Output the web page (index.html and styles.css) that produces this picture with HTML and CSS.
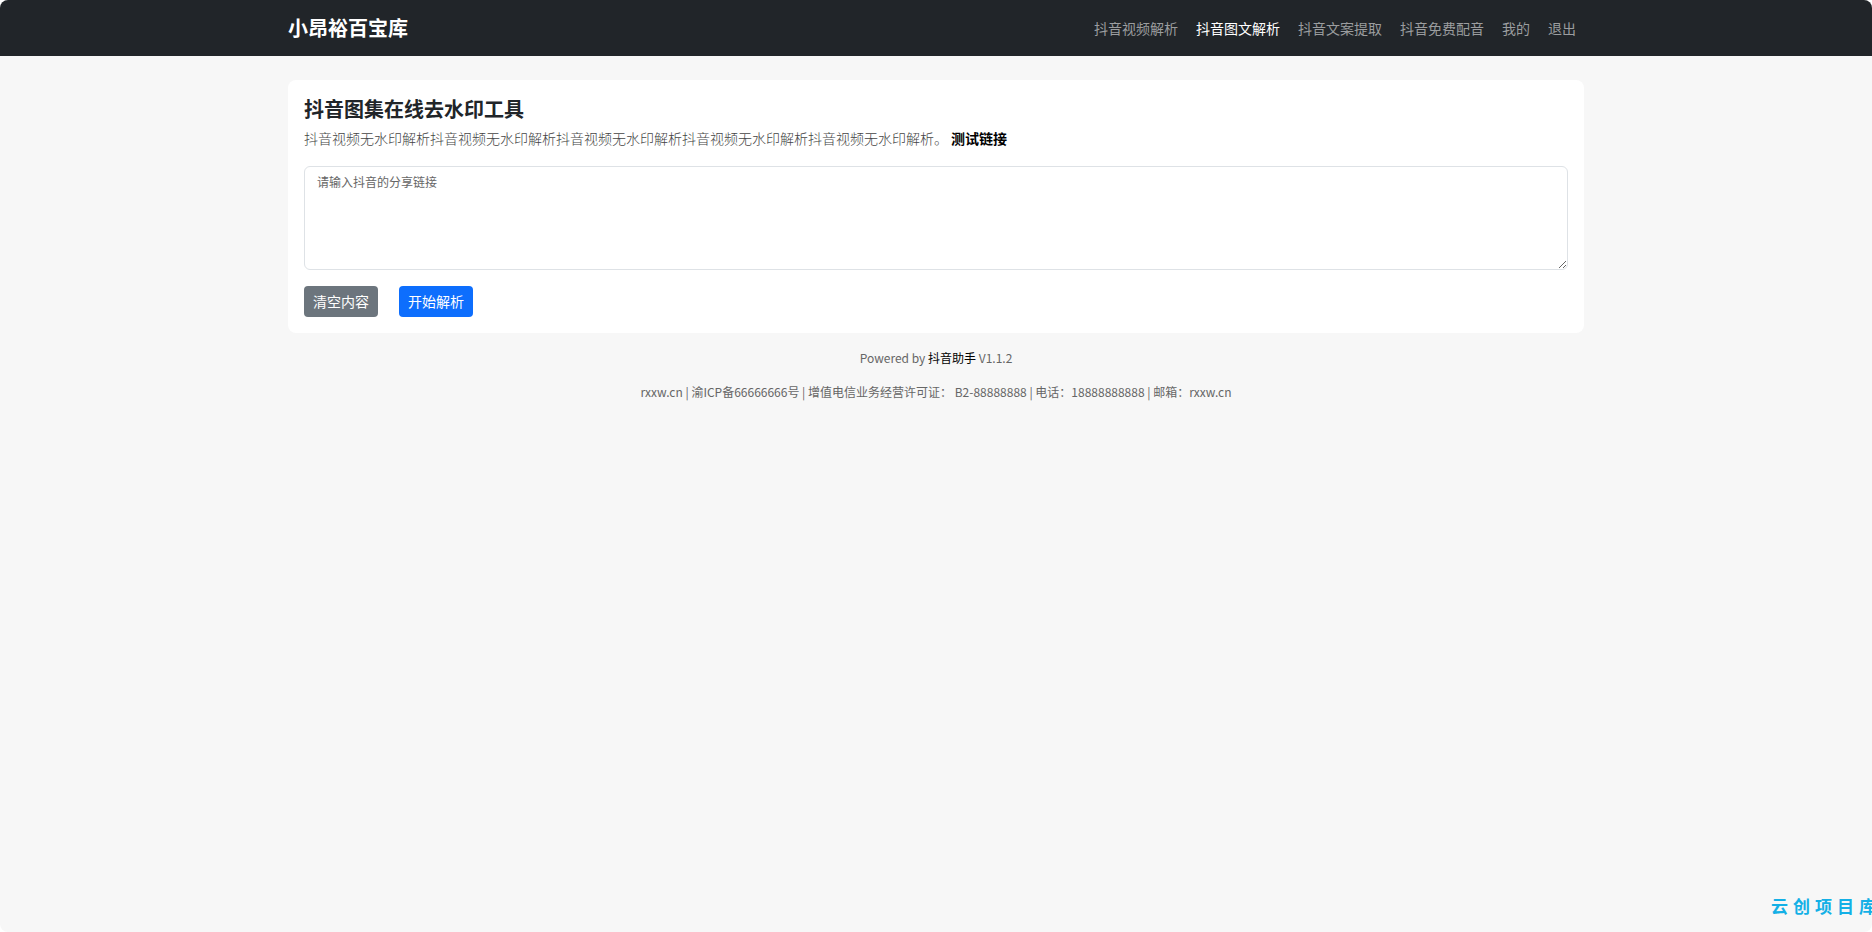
FILE: index.html
```html
<!DOCTYPE html>
<html lang="zh-CN">
<head>
<meta charset="utf-8">
<meta name="viewport" content="width=device-width, initial-scale=1">
<title>抖音图集在线去水印工具</title>
<link rel="stylesheet" href="styles.css">
</head>
<body>
<div class="page">
  <header class="navbar">
    <div class="container navbar-inner">
      <a class="brand" href="#">小昂裕百宝库</a>
      <nav class="nav">
        <a class="nav-link" href="#">抖音视频解析</a>
        <a class="nav-link active" href="#" aria-current="page">抖音图文解析</a>
        <a class="nav-link" href="#">抖音文案提取</a>
        <a class="nav-link" href="#">抖音免费配音</a>
        <a class="nav-link" href="#">我的</a>
        <a class="nav-link" href="#">退出</a>
      </nav>
    </div>
  </header>
  <main class="container main">
    <section class="card">
      <h1 class="title">抖音图集在线去水印工具</h1>
      <p class="intro">抖音视频无水印解析抖音视频无水印解析抖音视频无水印解析抖音视频无水印解析抖音视频无水印解析。 <a class="test-link" href="#">测试链接</a></p>
      <form class="form">
        <textarea class="share-input" aria-label="分享链接" placeholder="请输入抖音的分享链接"></textarea>
        <div class="actions">
          <button class="btn btn-secondary" type="reset">清空内容</button>
          <button class="btn btn-primary" type="button">开始解析</button>
        </div>
      </form>
    </section>
  </main>
  <footer class="footer">
    <p class="footer-line">Powered by <a class="footer-link" href="#">抖音助手</a> V1.1.2</p>
    <p class="footer-line">rxxw.cn | 渝ICP备66666666号 | 增值电信业务经营许可证： B2-88888888 | 电话：18888888888 | 邮箱：rxxw.cn</p>
  </footer>
  <div class="watermark"><span>云</span><span>创</span><span>项</span><span>目</span><span>库</span></div>
</div>
</body>
</html>
```
FILE: styles.css
```css
*, *::before, *::after { box-sizing: border-box; }
html { background: #fff; }
body {
  margin: 0;
  color: #212529;
  font-family: "Noto Sans CJK SC", "Noto Sans", sans-serif;
  font-size: 14px;
  line-height: 24px;
}
a { text-decoration: none; }
.page {
  position: relative;
  min-height: 100vh;
  overflow: hidden;
  border-radius: 8px;
  background: #f7f7f7;
}
.container {
  width: 100%;
  max-width: 1320px;
  margin: 0 auto;
  padding: 0 12px;
}
.navbar { background: #212529; }
.navbar-inner {
  display: flex;
  align-items: center;
  justify-content: space-between;
  min-height: 56px;
}
.brand {
  color: #fff;
  font-size: 20px;
  font-weight: 700;
}
.nav {
  display: flex;
  gap: 18px;
  padding-right: 8px;
}
.nav-link { color: #9b9d9f; }
.nav-link.active { color: #fff; }
.main { padding-top: 24px; }
.card {
  padding: 16px;
  border-radius: 8px;
  background: #fff;
}
.title {
  margin: 0 0 4px;
  font-size: 20px;
  font-weight: 700;
  line-height: 26px;
}
.intro {
  margin: 0 0 16px;
  color: #444;
  font-weight: 300;
  line-height: 24px;
}
.test-link {
  color: #000;
  font-weight: 700;
}
.share-input {
  display: block;
  width: 100%;
  height: 104px;
  padding: 6px 12px;
  border: 1px solid #dee2e6;
  border-radius: 6px;
  background: #fff;
  color: #212529;
  font: inherit;
  font-size: 12px;
  line-height: 18px;
  resize: vertical;
}
.share-input::placeholder { color: #666; }
.actions {
  display: flex;
  gap: 21px;
  margin-top: 16px;
}
.btn {
  height: 31px;
  padding: 0 9px 2px;
  border: 0;
  border-radius: 4px;
  color: #fff;
  font: inherit;
}
.btn-secondary { background: #6c757d; }
.btn-primary { background: #0d6efd; }
.footer {
  padding: 16px 12px;
  color: #666;
  font-size: 12px;
  line-height: 18px;
  text-align: center;
}
.footer-line { margin: 0 0 16px; }
.footer-link { color: #000; }
.watermark {
  position: absolute;
  right: -4px;
  bottom: 14px;
  display: flex;
  gap: 5px;
  color: #14b0e6;
  font-size: 17px;
  font-weight: 700;
}
```
